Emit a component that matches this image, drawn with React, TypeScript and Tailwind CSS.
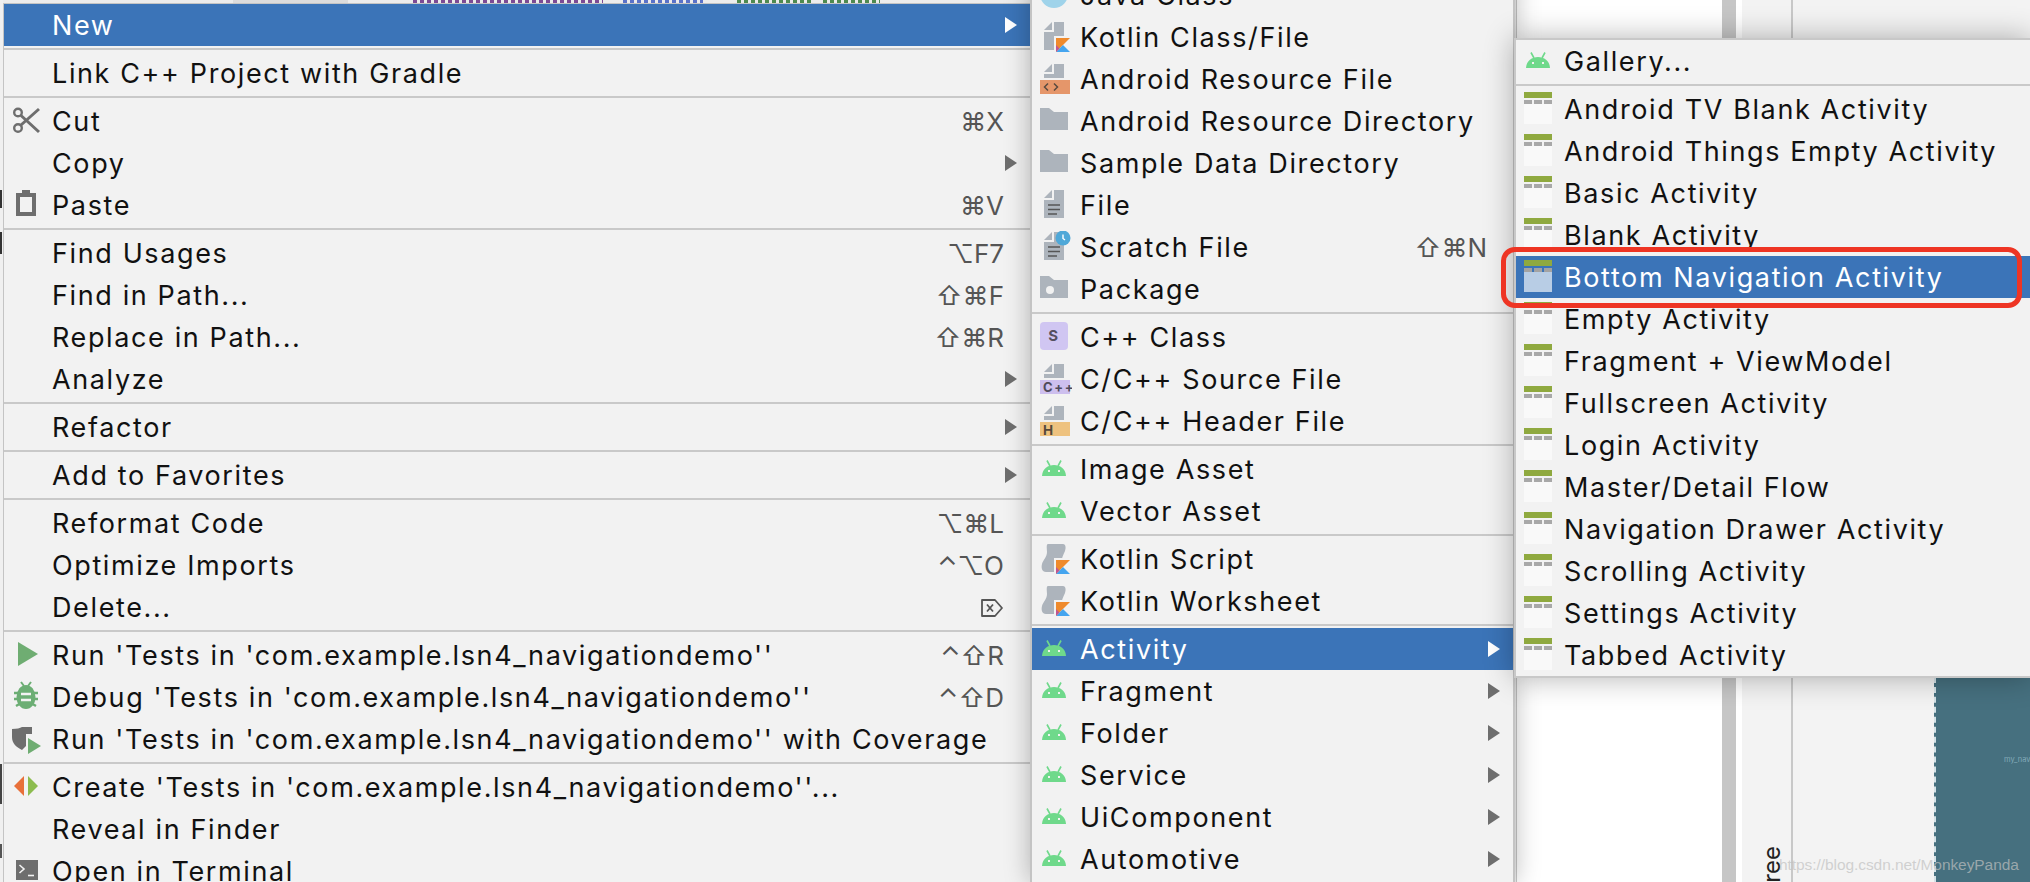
import type { ReactNode } from 'react';

type Item = {
  label?: string;
  icon?: ReactNode;
  hint?: ReactNode;
  arrow?: boolean;
  active?: boolean;
  sep?: boolean;
};

const GRAY = '#6e6e6e';
const DOC = '#adb4bc';

function Ico({ children }: { children: ReactNode }) {
  return (
    <svg width="32" height="32" viewBox="0 0 32 32" className="shrink-0">
      {children}
    </svg>
  );
}

function Android() {
  return (
    <Ico>
      <path d="M2 23 C2.5 15.5 8 12 14 12 C20 12 25.5 15.5 26 23 Z" fill="#6fd98b" />
      <path d="M7 7.5 L10 13 M21 7.5 L18 13" stroke="#6fd98b" strokeWidth="1.6" />
      <rect x="8" y="17" width="2" height="2" fill="#f2f2f2" />
      <rect x="18" y="17" width="2" height="2" fill="#f2f2f2" />
    </Ico>
  );
}

function Kt() {
  return (
    <>
      <polygon points="16,17 30,17 16,31" fill="#ef8a2c" />
      <polygon points="23,24 30,31 16,31" fill="#45a5ef" />
      <polygon points="16,24 19.5,27.5 16,31" fill="#c0568f" />
    </>
  );
}

function DocShape() {
  return <path d="M4 9 L12 1 V9 Z M14 1 H24 V29 H4 V11 H14 Z" fill={DOC} />;
}

function KotlinClass() {
  return (
    <Ico>
      <DocShape />
      <rect x="14" y="15" width="18" height="17" fill="#f2f2f2" />
      <Kt />
    </Ico>
  );
}

function KotlinScript() {
  return (
    <Ico>
      <path d="M8 1 H23 C26 1 26 5 25 8 C24 11 22 13 22 17 V29 H6 C2 29 1 25 2 21 C3 17 7 14 7 9 C7 6 6 1 8 1 Z" fill={DOC} />
      <rect x="14" y="15" width="18" height="17" fill="#f2f2f2" />
      <Kt />
    </Ico>
  );
}

function BandFile({ color, children }: { color: string; children?: ReactNode }) {
  return (
    <Ico>
      <path d="M4 9 L12 1 V9 Z M14 1 H24 V15 H4 V11 H14 Z" fill={DOC} />
      <rect x="0" y="17" width="30" height="14" fill={color} />
      {children}
    </Ico>
  );
}

function Folder({ dot }: { dot?: boolean }) {
  return (
    <Ico>
      <path d="M0 3 H9 L14 7 H28 V25 H0 Z" fill={DOC} />
      {dot && <circle cx="10" cy="17" r="4" fill="#f2f2f2" />}
    </Ico>
  );
}

function FileIcon({ clock }: { clock?: boolean }) {
  return (
    <Ico>
      <DocShape />
      <path d="M8 16 H20 M8 20.5 H20 M8 25 H17" stroke="#555" strokeWidth="1.6" />
      {clock && (
        <>
          <circle cx="23" cy="7" r="7.5" fill="#4fa8d8" />
          <path d="M23 3.5 V7.5 L25 9" stroke="#fff" strokeWidth="1.4" fill="none" />
        </>
      )}
    </Ico>
  );
}

function ActivityIcon({ active }: { active?: boolean }) {
  return (
    <svg width="28" height="34" viewBox="0 0 28 34" className="shrink-0">
      <rect x="0" y="0" width="28" height="6" fill="#8fa93f" />
      <rect x="0" y="8" width="8" height="4" fill={active ? '#a3a3a3' : '#a8a8a8'} />
      <rect x="10" y="8" width="8" height="4" fill={active ? '#a3a3a3' : '#a8a8a8'} />
      <rect x="20" y="8" width="8" height="4" fill={active ? '#a3a3a3' : '#a8a8a8'} />
      <rect x="0" y="12" width="28" height="20" fill={active ? '#b8cde5' : '#f9f9f9'} />
    </svg>
  );
}

function Play() {
  return (
    <Ico>
      <polygon points="6,3 26,15 6,27" fill="#6fad72" />
    </Ico>
  );
}

function Bug() {
  return (
    <Ico>
      <path d="M9 1 L12 5 M19 1 L16 5" stroke="#6cae74" strokeWidth="2" />
      <path d="M2 12 H26 M2 18 H26 M4 25 L9 22 M24 25 L19 22" stroke="#6cae74" strokeWidth="2.4" />
      <ellipse cx="14" cy="16" rx="9.5" ry="12" fill="#6cae74" />
      <path d="M9 13 H19 M9 19 H19" stroke="#f2f2f2" strokeWidth="2.4" />
    </Ico>
  );
}

function Coverage() {
  return (
    <Ico>
      <path d="M0 6 C5 6 8 5 10 4 H20 V11 H14 V23 L10 27 C4 24 0 20 0 14 Z" fill={GRAY} />
      <polygon points="16,15 29,23 16,31" fill="#6fad72" />
    </Ico>
  );
}

function Scissors() {
  return (
    <Ico>
      <g stroke={GRAY} fill="none">
        <circle cx="6" cy="7.5" r="3.8" strokeWidth="2.4" />
        <circle cx="6" cy="23" r="3.8" strokeWidth="2.4" />
        <path d="M9 10.5 L27 27 M9 20 L27 4" strokeWidth="3" />
      </g>
    </Ico>
  );
}

function Clipboard() {
  return (
    <Ico>
      <path d="M4 4 H10 V1 H18 V4 H24 V27 H4 Z" fill={GRAY} />
      <rect x="8" y="8" width="12" height="15" fill="#f2f2f2" />
    </Ico>
  );
}

function Arrows() {
  return (
    <Ico>
      <polygon points="12,5 12,25 2,15" fill="#e8703a" />
      <polygon points="16,5 16,25 26,15" fill="#8cbc4f" />
    </Ico>
  );
}

function TerminalIcon() {
  return (
    <Ico>
      <rect x="4" y="5" width="22" height="20" fill={GRAY} />
      <path d="M7.5 10 L12 14 L7.5 18" stroke="#f2f2f2" strokeWidth="1.6" fill="none" />
      <path d="M16 20.5 H22" stroke="#f2f2f2" strokeWidth="1.6" />
    </Ico>
  );
}

function BackspaceIcon() {
  return (
    <svg width="24" height="20" viewBox="0 0 24 20">
      <path d="M2 2 H15 L22 10 L15 18 H2 Z" fill="none" stroke="#555" strokeWidth="1.8" strokeLinejoin="round" />
      <path d="M7 6.5 L13 13.5 M13 6.5 L7 13.5" stroke="#555" strokeWidth="1.8" />
    </svg>
  );
}

const SEP: Item = { sep: true };

const mainMenu: Item[] = [
  { label: 'New', arrow: true, active: true },
  SEP,
  { label: 'Link C++ Project with Gradle' },
  SEP,
  { label: 'Cut', icon: <Scissors />, hint: '⌘X' },
  { label: 'Copy', arrow: true },
  { label: 'Paste', icon: <Clipboard />, hint: '⌘V' },
  SEP,
  { label: 'Find Usages', hint: '⌥F7' },
  { label: 'Find in Path...', hint: '⇧⌘F' },
  { label: 'Replace in Path...', hint: '⇧⌘R' },
  { label: 'Analyze', arrow: true },
  SEP,
  { label: 'Refactor', arrow: true },
  SEP,
  { label: 'Add to Favorites', arrow: true },
  SEP,
  { label: 'Reformat Code', hint: '⌥⌘L' },
  { label: 'Optimize Imports', hint: '⌃⌥O' },
  { label: 'Delete...', hint: <BackspaceIcon /> },
  SEP,
  { label: "Run 'Tests in 'com.example.lsn4_navigationdemo''", icon: <Play />, hint: '⌃⇧R' },
  { label: "Debug 'Tests in 'com.example.lsn4_navigationdemo''", icon: <Bug />, hint: '⌃⇧D' },
  { label: "Run 'Tests in 'com.example.lsn4_navigationdemo'' with Coverage", icon: <Coverage /> },
  SEP,
  { label: "Create 'Tests in 'com.example.lsn4_navigationdemo''...", icon: <Arrows /> },
  { label: 'Reveal in Finder' },
  { label: 'Open in Terminal', icon: <TerminalIcon /> },
];

const newMenu: Item[] = [
  {
    label: 'Java Class',
    icon: (
      <Ico>
        <circle cx="14" cy="15" r="14" fill="#9fd3ea" />
      </Ico>
    ),
  },
  { label: 'Kotlin Class/File', icon: <KotlinClass /> },
  {
    label: 'Android Resource File',
    icon: (
      <BandFile color="#e5966a">
        <path d="M8 20.5 L4.5 24 L8 27.5 M14 20.5 L17.5 24 L14 27.5" stroke="#5a4a40" strokeWidth="1.5" fill="none" />
      </BandFile>
    ),
  },
  { label: 'Android Resource Directory', icon: <Folder /> },
  { label: 'Sample Data Directory', icon: <Folder /> },
  { label: 'File', icon: <FileIcon /> },
  { label: 'Scratch File', icon: <FileIcon clock />, hint: '⇧⌘N' },
  { label: 'Package', icon: <Folder dot /> },
  SEP,
  {
    label: 'C++ Class',
    icon: (
      <Ico>
        <rect x="0" y="1" width="28" height="28" rx="4" fill="#d0c6f2" />
        <text x="14" y="20" textAnchor="middle" fontSize="15" fontWeight="700" fill="#55505f" fontFamily="Inter">
          S
        </text>
      </Ico>
    ),
  },
  {
    label: 'C/C++ Source File',
    icon: (
      <BandFile color="#cdbfee">
        <text x="3" y="29" fontSize="13" fontWeight="700" fill="#4f4a5a" fontFamily="Inter">
          C++
        </text>
      </BandFile>
    ),
  },
  {
    label: 'C/C++ Header File',
    icon: (
      <BandFile color="#eec27f">
        <text x="3" y="29.5" fontSize="13.5" fontWeight="700" fill="#56493a" fontFamily="Inter">
          H
        </text>
      </BandFile>
    ),
  },
  SEP,
  { label: 'Image Asset', icon: <Android /> },
  { label: 'Vector Asset', icon: <Android /> },
  SEP,
  { label: 'Kotlin Script', icon: <KotlinScript /> },
  { label: 'Kotlin Worksheet', icon: <KotlinScript /> },
  SEP,
  { label: 'Activity', icon: <Android />, arrow: true, active: true },
  { label: 'Fragment', icon: <Android />, arrow: true },
  { label: 'Folder', icon: <Android />, arrow: true },
  { label: 'Service', icon: <Android />, arrow: true },
  { label: 'UiComponent', icon: <Android />, arrow: true },
  { label: 'Automotive', icon: <Android />, arrow: true },
];

const activityNames = [
  'Android TV Blank Activity',
  'Android Things Empty Activity',
  'Basic Activity',
  'Blank Activity',
  'Bottom Navigation Activity',
  'Empty Activity',
  'Fragment + ViewModel',
  'Fullscreen Activity',
  'Login Activity',
  'Master/Detail Flow',
  'Navigation Drawer Activity',
  'Scrolling Activity',
  'Settings Activity',
  'Tabbed Activity',
];

const galleryMenu: Item[] = [
  { label: 'Gallery...', icon: <Android /> },
  SEP,
  ...activityNames.map((name) => {
    const active = name === 'Bottom Navigation Activity';
    return { label: name, icon: <ActivityIcon active={active} />, active };
  }),
];

function MenuRow({ item }: { item: Item }) {
  if (item.sep) {
    return (
      <div className="flex h-[6px] items-center">
        <div className="h-[2px] w-full bg-[#c9c9c9]" />
      </div>
    );
  }
  return (
    <div
      className={
        'flex h-[42px] items-center pl-[8px] text-[27px] tracking-[1.62px] whitespace-nowrap ' +
        (item.active ? 'bg-[#3b74b8] text-white' : 'text-[#111111]')
      }
    >
      <div className="flex w-[40px] shrink-0 items-center">{item.icon}</div>
      <span className="flex-1 pt-[2px] leading-[40px]">{item.label}</span>
      {item.hint && (
        <span className="flex items-center pt-[2px] pr-[26px] text-[26px] leading-[40px] tracking-normal text-[#555555]">
          {item.hint}
        </span>
      )}
      {item.arrow && (
        <svg width="12" height="16" viewBox="0 0 12 16" className="mr-[13px] shrink-0">
          <polygon points="0,0 12,8 0,16" fill={item.active ? '#ffffff' : GRAY} />
        </svg>
      )}
    </div>
  );
}

function TopStrip() {
  return (
    <div className="flex h-[3px] shrink-0 bg-[#ececec]">
      <div className="ml-[230px] h-full w-[115px] bg-[#dcdcdc]" />
      <div className="ml-[65px] h-full w-[190px] bg-[repeating-linear-gradient(90deg,#7d4a94_0_4px,transparent_4px_7px)]" />
      <div className="ml-[20px] h-full w-[80px] bg-[repeating-linear-gradient(90deg,#5a72c8_0_4px,transparent_4px_7px)]" />
      <div className="ml-[34px] h-full w-[76px] bg-[repeating-linear-gradient(90deg,#4f8a4f_0_4px,transparent_4px_7px)]" />
      <div className="ml-[10px] h-full w-[57px] bg-[repeating-linear-gradient(90deg,#4f8a4f_0_4px,transparent_4px_7px)]" />
    </div>
  );
}

function EdgeStrip() {
  return (
    <div className="flex w-[3px] shrink-0 flex-col bg-[#f0f0f0]">
      <div className="mt-[190px] h-[18px] w-[2px] bg-[#333333]" />
      <div className="mt-[24px] h-[22px] w-[2px] bg-[#333333]" />
      <div className="mt-[510px] h-[40px] w-[2px] bg-[#444444]" />
      <div className="mt-[40px] h-[14px] w-[2px] bg-[#555555]" />
    </div>
  );
}

function BackdropPanels() {
  return (
    <div className="flex h-full w-full">
      <div className="w-px bg-[#f0f0f0]" />
      <div className="w-[206px] border-l border-[#c8c8c8] bg-white" />
      <div className="w-[14px] bg-[#c6c6c6]" />
      <div className="w-[6px] bg-white" />
      <div className="flex w-[49px] flex-col items-center bg-[#f3f3f3] pt-[846px] pl-[11px]">
        <span className="rotate-180 font-['Inter',sans-serif] text-[24px] leading-none whitespace-nowrap text-[#222222] [writing-mode:vertical-rl]">
          Component Tree
        </span>
      </div>
      <div className="w-[143px] border-l-2 border-[#c8c8c8] bg-[#f3f3f3]" />
      <div className="flex flex-1 flex-col bg-[#f3f3f3]">
        <div className="h-[40px]" />
        <div className="flex-1 border-l-2 border-dashed border-[#d5e3e8] bg-[#46707f] pt-[714px] pl-[68px] text-[7.5px] whitespace-nowrap text-[#82aab8]">
          my_nav
        </div>
      </div>
    </div>
  );
}

export default function App() {
  return (
    <div className="relative flex h-[882px] w-[2030px] overflow-hidden bg-[#f0f0f0] font-['Inter','DejaVu_Sans',sans-serif]">
      <EdgeStrip />

      <div className="flex w-[1027px] shrink-0 flex-col">
        <TopStrip />
        <div className="border-t border-l border-[#c4c4c4] bg-[#f2f2f2]">
          {mainMenu.map((item, i) => (
            <MenuRow key={i} item={item} />
          ))}
        </div>
      </div>

      <div className="relative z-10 mt-[-26px] h-[908px] w-[485px] shrink-0 border-x-2 border-[#c4c4c4] bg-[#f2f2f2] shadow-[0_0_24px_rgba(0,0,0,0.28)]">
        {newMenu.map((item, i) => (
          <MenuRow key={i} item={item} />
        ))}
      </div>

      <div className="relative flex-1">
        <BackdropPanels />
        <div className="absolute top-[38px] right-0 left-[-1px] z-20 border-y-2 border-l-2 border-[#c8c8c8] bg-[#f2f2f2] shadow-[0_0_28px_rgba(0,0,0,0.3)]">
          {galleryMenu.map((item, i) => (
            <MenuRow key={i} item={item} />
          ))}
        </div>
      </div>

      {/* red highlight drawn over the screenshot */}
      <div className="absolute top-[247px] left-[1501px] z-30 h-[61px] w-[521px] rounded-[14px] border-[5px] border-[#ee3524]" />

      <span className="absolute top-[853px] left-[1779px] z-30 font-['Liberation_Sans',sans-serif] text-[15.5px] tracking-[-0.07px] whitespace-nowrap text-[#c0c0c0]/70">
        https://blog.csdn.net/MonkeyPanda
      </span>
    </div>
  );
}
